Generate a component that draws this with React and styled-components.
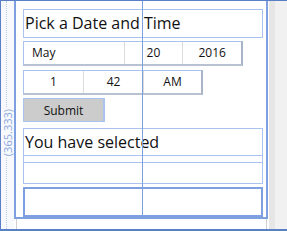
import React from 'react'
import styled, { createGlobalStyle } from 'styled-components'

const GlobalStyle = createGlobalStyle`
  html, body {
    margin: 0;
    padding: 0;
    background: #ffffff;
  }
  body {
    font-family: "Open Sans", "Noto Sans", "Liberation Sans", sans-serif;
    color: #111;
  }
`

const Frame = styled.div`
  width: 287px;
  height: 231px;
  box-sizing: border-box;
  display: flex;
  flex-direction: row;
  border-top: 1px solid #5b7fc7;
  border-bottom: 2px solid #5b7fc7;
  border-left: 1px solid #5b7fc7;
  overflow: hidden;
`

const Ruler = styled.div`
  width: 13px;
  position: relative;
  background: #f7f9fd;
  display: flex;
  align-items: flex-start;
  justify-content: center;
  &:before {
    content: '';
    position: absolute;
    left: 5px;
    top: 0;
    bottom: 0;
    border-left: 1px dotted #b9c9e6;
  }
`

const RulerLabel = styled.div`
  margin-top: 106px;
  writing-mode: vertical-rl;
  transform: rotate(180deg);
  font-size: 11px;
  line-height: 13px;
  color: #88a6dc;
  background: #f7f9fd;
  position: relative;
  padding: 2px 0;
  white-space: nowrap;
`

const CanvasCol = styled.div`
  display: flex;
  flex-direction: column;
  width: 255px;
`

const Canvas = styled.div`
  position: relative;
  height: 218px;
  box-sizing: border-box;
  border-left: 2px solid #7fa0e0;
  border-right: 2px solid #7fa0e0;
  border-bottom: 2px solid #7fa0e0;
  padding: 8px 0 0 7px;
  display: flex;
  flex-direction: column;
`

const CanvasTail = styled.div`
  flex: 1;
  margin-left: 2px;
  border-left: 1px solid #cfcfcf;
  width: 249px;
  border-right: 1px solid #cfcfcf;
`

const Guide = styled.div`
  position: absolute;
  left: 126px;
  top: -2px;
  bottom: -2px;
  border-left: 1px solid #7fa0e0;
`

const Box = styled.div`
  width: ${p => p.w}px;
  height: ${p => p.h}px;
  box-sizing: border-box;
  border: ${p => (p.thick ? '2px solid #7fa0e0' : '1px solid #a9c3ef')};
  margin-top: ${p => p.mt || 0}px;
  font-size: 16px;
  line-height: 16px;
  padding: ${p => p.pt || 0}px 0 0 1px;
  color: #111;
  background: ${p => (p.clear ? 'transparent' : '#fff')};
`

const Row = styled.div`
  display: flex;
  flex-direction: row;
  width: ${p => p.w}px;
  height: ${p => p.h}px;
  box-sizing: border-box;
  margin-top: ${p => p.mt}px;
  border: 1px solid #a9c3ef;
  border-right: 2px solid #a8b3c6;
  border-bottom: 2px solid #b8c2d3;
`

const Cell = styled.div`
  width: ${p => p.w}px;
  box-sizing: border-box;
  display: flex;
  align-items: center;
  justify-content: ${p => (p.left ? 'flex-start' : 'center')};
  padding-left: ${p => (p.left ? 8 : 0)}px;
  font-size: 12px;
  color: #111;
  border-right: ${p => (p.last ? 'none' : '1px solid #dcdcdc')};
`

const SubmitButton = styled.button`
  width: 82px;
  height: 24px;
  margin-top: 3px;
  box-sizing: border-box;
  background: #cccccc;
  border: 1px solid #a9c3ef;
  border-right: 2px solid #a9c3ef;
  font-family: inherit;
  font-size: 12px;
  color: #111;
  padding: 0;
`

const Scrollbar = styled.div`
  width: 18px;
  margin-left: 1px;
  background: #f1f1f1;
  border-left: 6px solid #e6e6e6;
  box-sizing: border-box;
`

export default function App() {
  return (
    <>
      <GlobalStyle />
      <Frame>
        <Ruler>
          <RulerLabel>(365.333)</RulerLabel>
        </Ruler>
        <CanvasCol>
          <Canvas>
            <Guide />
            <Box w={240} h={29} pt={5}>Pick a Date and Time</Box>
            <Row w={220} h={25} mt={3}>
              <Cell w={101} left>May</Cell>
              <Cell w={59}>20</Cell>
              <Cell w={58} last>2016</Cell>
            </Row>
            <Row w={180} h={26} mt={4}>
              <Cell w={60}>1</Cell>
              <Cell w={60}>42</Cell>
              <Cell w={57} last>AM</Cell>
            </Row>
            <SubmitButton>Submit</SubmitButton>
            <Box w={240} h={35} mt={6} pt={5}>You have selected</Box>
            <Box w={240} h={30} mt={-8} clear />
            <Box w={240} h={30} mt={3} thick />
          </Canvas>
          <CanvasTail />
        </CanvasCol>
        <Scrollbar />
      </Frame>
    </>
  )
}
